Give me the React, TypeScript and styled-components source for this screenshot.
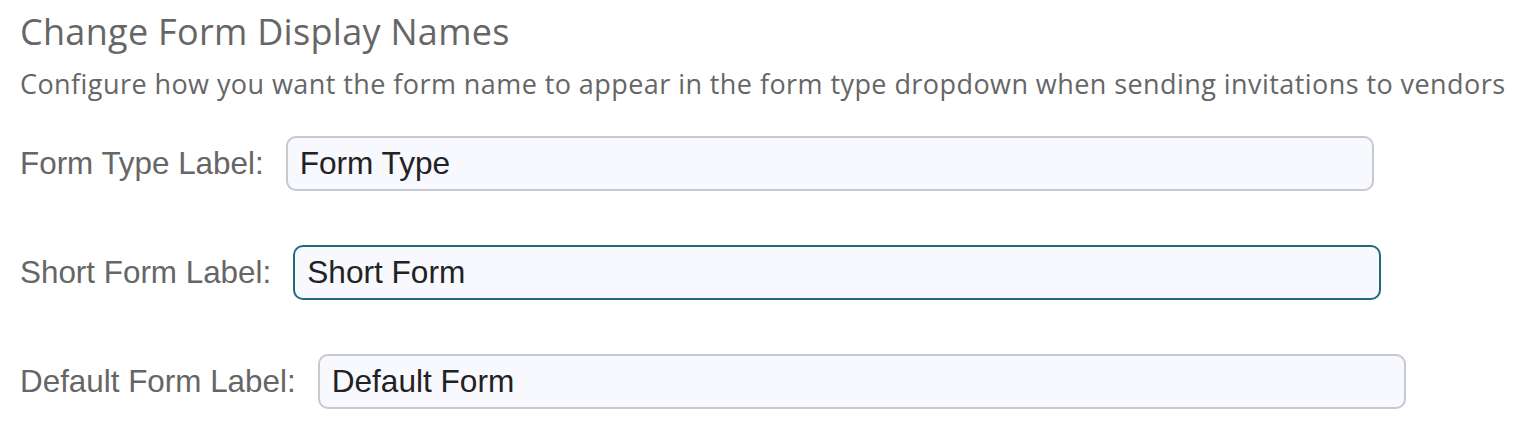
import React from "react";
import styled, { createGlobalStyle } from "styled-components";

const Global = createGlobalStyle`
  html, body { margin: 0; padding: 0; background: #ffffff; }
  * { box-sizing: border-box; }
`;

const Page = styled.div`
  padding: 12px 0 0 20px;
  width: 1524px;
  height: 444px;
  overflow: hidden;
`;

const Title = styled.h2`
  margin: 0;
  font-family: "Open Sans", "Noto Sans", sans-serif;
  font-weight: 400;
  font-size: 36px;
  line-height: 40px;
  color: #666666;
  letter-spacing: 0.3px;
`;

const Subtitle = styled.p`
  margin: 16px 0 0;
  font-family: "Open Sans", "Noto Sans", sans-serif;
  font-weight: 400;
  font-size: 27px;
  line-height: 32px;
  color: #666666;
  letter-spacing: 0.43px;
  white-space: nowrap;
`;

const Form = styled.div`
  display: flex;
  flex-direction: column;
  gap: 54px;
  margin-top: 36px;
`;

const Row = styled.div`
  display: flex;
  align-items: center;
  gap: 22px;
`;

const Label = styled.label`
  font-family: "Liberation Sans", Arial, sans-serif;
  font-size: 31.4px;
  color: #666666;
  white-space: nowrap;
`;

const Input = styled.input<{ $focused?: boolean }>`
  width: 1088px;
  height: 55px;
  padding: 0 12px;
  font-family: "Liberation Sans", Arial, sans-serif;
  font-size: 31.6px;
  color: #222222;
  background: #f8f9fe;
  border: 2px solid ${(p) => (p.$focused ? "#1f6a7b" : "#c8c9ce")};
  border-radius: 10px;
  outline: none;
`;

const fields = [
  { label: "Form Type Label:", value: "Form Type", focused: false },
  { label: "Short Form Label:", value: "Short Form", focused: true },
  { label: "Default Form Label:", value: "Default Form", focused: false },
];

export default function App() {
  return (
    <>
      <Global />
      <Page>
        <Title>Change Form Display Names</Title>
        <Subtitle>
          Configure how you want the form name to appear in the form type dropdown when sending invitations to vendors
        </Subtitle>
        <Form>
          {fields.map((f) => (
            <Row key={f.label}>
              <Label>{f.label}</Label>
              <Input $focused={f.focused} defaultValue={f.value} readOnly />
            </Row>
          ))}
        </Form>
      </Page>
    </>
  );
}
